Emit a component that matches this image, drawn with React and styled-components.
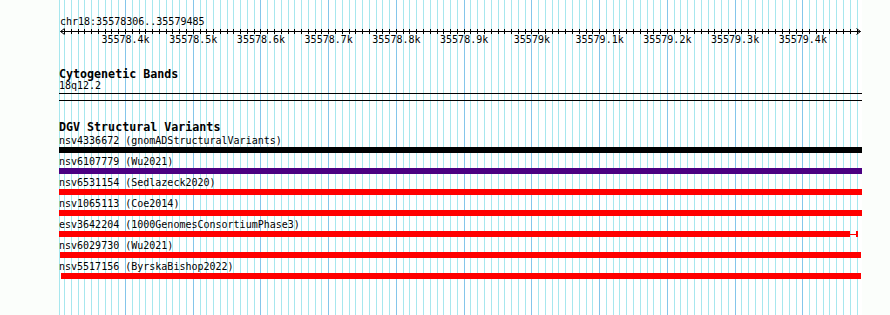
import React from 'react';
import styled, { createGlobalStyle } from 'styled-components';

// genome coordinates -> canvas pixels (canvas starts at x=59 on the page)
const CANVAS_LEFT = 59;
const CANVAS_WIDTH = 803;
const PX_PER_BP = 0.67733;
const ORIGIN_BP = 35578400;
const ORIGIN_X = 125 - CANVAS_LEFT;

const toX = (bp) => ORIGIN_X + (bp - ORIGIN_BP) * PX_PER_BP;
const snap = (x) => Math.round(x) + 0.5;

const MINOR = [];
for (let bp = 35578310; bp <= 35579480; bp += 10) MINOR.push(bp);
const MAJOR = MINOR.filter((bp) => bp % 100 === 0);

const COLOR = {
  PAGE: '#fbfefb',
  GRID: '#a7e7ee',
  GRID_MAJOR: '#84c6ea',
  INK: '#000',
  RED: '#ff0000',
  PURPLE: '#4b0082',
};

const variants = [
  { id: 'nsv4336672', source: 'gnomADStructuralVariants', color: COLOR.INK, left: 0, right: 803 },
  { id: 'nsv6107779', source: 'Wu2021', color: COLOR.PURPLE, left: 0, right: 803 },
  { id: 'nsv6531154', source: 'Sedlazeck2020', color: COLOR.RED, left: 0, right: 803 },
  { id: 'nsv1065113', source: 'Coe2014', color: COLOR.RED, left: 0, right: 803 },
  { id: 'esv3642204', source: '1000GenomesConsortiumPhase3', color: COLOR.RED, left: 0, right: 791, whisker: 8 },
  { id: 'nsv6029730', source: 'Wu2021', color: COLOR.RED, left: 1, right: 802 },
  { id: 'nsv5517156', source: 'ByrskaBishop2022', color: COLOR.RED, left: 2, right: 802 },
];

const GlobalStyle = createGlobalStyle`
  html, body {
    margin: 0;
    padding: 0;
    background: ${COLOR.PAGE};
  }
  body {
    font-family: "DejaVu Sans Mono", "Liberation Mono", monospace;
    color: ${COLOR.INK};
  }
`;

const Page = styled.div`
  height: 315px;
  overflow: hidden;
`;

const Canvas = styled.div`
  position: relative;
  margin-left: ${CANVAS_LEFT}px;
  width: ${CANVAS_WIDTH}px;
  height: 100%;
  background: #fff;
`;

const GridLayer = styled.svg`
  position: absolute;
  inset: 0;
  pointer-events: none;
`;

const Tracks = styled.div`
  position: relative;
  z-index: 1;
  display: flex;
  flex-direction: column;
  padding-top: 16px;
`;

const Location = styled.div`
  font-size: 10px;
  line-height: 12px;
  padding-left: 1px;
`;

const RulerLine = styled.svg`
  display: block;
  overflow: visible;
`;

const RulerLabels = styled.div`
  position: relative;
  height: 12px;
  font-size: 10px;
  line-height: 12px;
`;

const TickLabel = styled.span`
  position: absolute;
  top: 0;
  transform: translateX(-50%);
  white-space: nowrap;
`;

const TrackHeader = styled.div`
  margin-top: ${(p) => p.$gap}px;
  font-size: 11.67px;
  font-weight: bold;
  line-height: 11px;
  white-space: nowrap;
`;

const FeatureLabel = styled.div`
  font-size: 10px;
  line-height: 12px;
  white-space: pre;
`;

const CytoStrip = styled.div`
  margin-top: 1px;
  height: 6px;
  border-top: 1px solid ${COLOR.INK};
  border-bottom: 1px solid ${COLOR.INK};
`;

const VariantList = styled.div`
  display: flex;
  flex-direction: column;
  margin-top: 2px;
`;

const BarRow = styled.div`
  display: flex;
  height: 6px;
  margin-bottom: 3px;
`;

const Block = styled.div`
  height: 100%;
  background: ${(p) => p.$color};
`;

const Whisker = styled.div`
  display: flex;
  align-items: center;
  height: 100%;
  &::before {
    content: '';
    flex: 1;
    height: 1px;
    background: ${(p) => p.$color};
  }
  &::after {
    content: '';
    width: 2px;
    height: 100%;
    background: ${(p) => p.$color};
  }
`;

const Grid = () => (
  <GridLayer width={CANVAS_WIDTH} height="315">
    <line x1="0.5" x2="0.5" y1="0" y2="315" stroke={COLOR.GRID} />
    {MINOR.map((bp) => (
      <line
        key={bp}
        x1={snap(toX(bp))}
        x2={snap(toX(bp))}
        y1="0"
        y2="315"
        stroke={bp % 100 === 0 ? COLOR.GRID_MAJOR : COLOR.GRID}
      />
    ))}
  </GridLayer>
);

const Ruler = () => (
  <>
    <RulerLine width={CANVAS_WIDTH} height="6">
      <g stroke={COLOR.INK} fill="none" strokeWidth="1">
        <line x1="1.5" x2="801.5" y1="3.5" y2="3.5" />
        <polyline points="5.5,0.5 1.5,3.5 5.5,6.5" />
        <polyline points="797.5,0.5 801.5,3.5 797.5,6.5" />
        {MINOR.map((bp) => (
          <line key={bp} x1={snap(toX(bp))} x2={snap(toX(bp))} y1="1" y2="6" />
        ))}
      </g>
    </RulerLine>
    <RulerLabels>
      {MAJOR.map((bp) => (
        <TickLabel key={bp} style={{ left: toX(bp) + 0.5 }}>
          {bp / 1000}k
        </TickLabel>
      ))}
    </RulerLabels>
  </>
);

const Variant = ({ v }) => (
  <>
    <FeatureLabel>{`${v.id} (${v.source})`}</FeatureLabel>
    <BarRow>
      <Block $color={v.color} style={{ marginLeft: v.left, width: v.right - v.left }} />
      {v.whisker && <Whisker $color={v.color} style={{ width: v.whisker }} />}
    </BarRow>
  </>
);

const App = () => (
  <Page>
    <GlobalStyle />
    <Canvas>
      <Grid />
      <Tracks>
        <Location>chr18:35578306..35579485</Location>
        <Ruler />

        <TrackHeader $gap={23}>Cytogenetic Bands</TrackHeader>
        <FeatureLabel>18q12.2</FeatureLabel>
        <CytoStrip />

        <TrackHeader $gap={21}>DGV Structural Variants</TrackHeader>
        <VariantList>
          {variants.map((v) => (
            <Variant key={v.id} v={v} />
          ))}
        </VariantList>
      </Tracks>
    </Canvas>
  </Page>
);

export default App;
